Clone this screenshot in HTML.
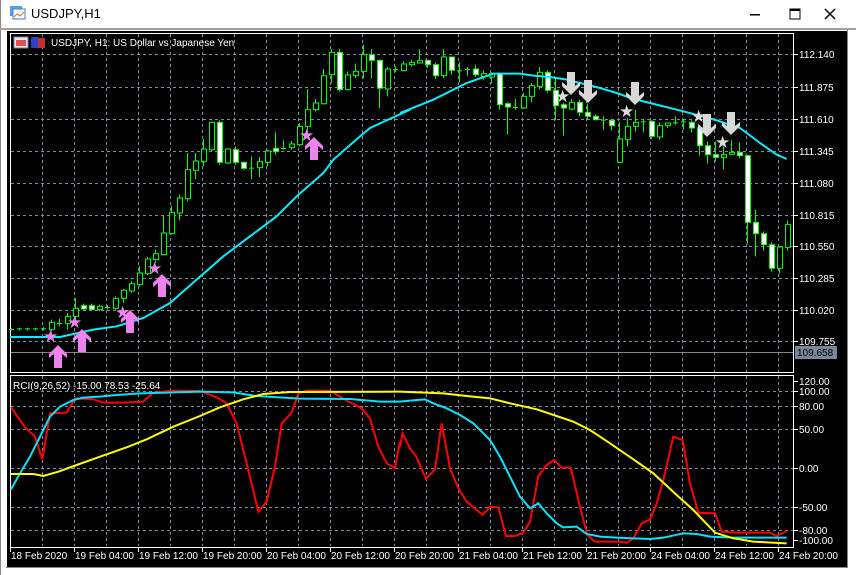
<!DOCTYPE html>
<html><head><meta charset="utf-8"><style>
body{margin:0;width:856px;height:575px;overflow:hidden;background:#fff;font-family:"Liberation Sans",sans-serif}
</style></head><body>
<svg width="856" height="575" style="position:absolute;left:0;top:0" id="s" font-family="Liberation Sans, sans-serif">
<rect x="0" y="0" width="856" height="575" fill="#fff"/>
<rect x="0" y="0" width="1" height="575" fill="#888"/>
<rect x="0" y="28" width="856" height="2" fill="#a0a0a0"/>
<rect x="7" y="31" width="840" height="536" fill="#000"/>
<rect x="847" y="30" width="1" height="538" fill="#888"/>
<rect x="6" y="567" width="842" height="1" fill="#888"/>
<rect x="10" y="6" width="12" height="10" fill="#5aa0e0"/><rect x="13" y="9" width="12" height="10" fill="#fff" stroke="#3a7fd0"/><path d="M14 17 L17 14 L20 16 L24 12" stroke="#e06020" fill="none"/>
<text x="31" y="18" font-size="13" fill="#000">USDJPY,H1</text>
<rect x="750" y="14" width="10" height="1.5" fill="#000"/>
<rect x="790" y="9" width="10" height="10" fill="none" stroke="#000"/><rect x="790" y="9" width="10" height="2" fill="#000"/>
<path d="M825 9 L835 19 M835 9 L825 19" stroke="#000" stroke-width="1.5"/>
<g id="g"></g>
</svg>
<script>
var g=document.getElementById('g'),h='';
function L(x1,y1,x2,y2,c,w,d){h+='<line x1="'+x1+'" y1="'+y1+'" x2="'+x2+'" y2="'+y2+'" stroke="'+c+'" stroke-width="'+(w||1)+'"'+(d?' stroke-dasharray="'+d+'"':'')+'/>';}
function T(x,y,s,c,sz){h+='<text x="'+x+'" y="'+y+'" fill="'+(c||'#fff')+'" font-size="'+(sz||10)+'">'+s+'</text>';}
var gc='#7f8da0';
for(var x=42;x<=778;x+=32){L(x+.5,34,x+.5,372,gc,1,'3,3');L(x+.5,376,x+.5,546,gc,1,'3,3');}
var py=[54,87,119,151,183,215,246,278,310,341],pl=['112.140','111.875','111.610','111.345','111.080','110.815','110.550','110.285','110.020','109.755'];
for(var i=0;i<py.length;i++){L(11,py[i]+.5,793,py[i]+.5,gc,1,'3,3');L(793,py[i]+.5,798,py[i]+.5,'#fff');T(799,py[i]+4,pl[i]);}
var iy=[381,391,406,429,468,507,530,540],il=['120.00','100.00','80.00','50.00','0.00','-50.00','-80.00','-100.00'];
for(var i=0;i<iy.length;i++){if(i>0&&i!=7)L(11,iy[i]+.5,793,iy[i]+.5,gc,1,'3,3');L(793,iy[i]+.5,798,iy[i]+.5,'#fff');T(799,iy[i]+4,il[i]);}
h+='<rect x="10.5" y="33.5" width="783" height="339" fill="none" stroke="#fff"/>';
h+='<rect x="10.5" y="375.5" width="783" height="172" fill="none" stroke="#fff"/>';
L(11,352.5,793,352.5,'#888');h+='<rect x="795" y="346" width="42" height="13" fill="#76889a"/>';T(797,356,'109.658','#000');
var tl=['18 Feb 2020','19 Feb 04:00','19 Feb 12:00','19 Feb 20:00','20 Feb 04:00','20 Feb 12:00','20 Feb 20:00','21 Feb 04:00','21 Feb 12:00','21 Feb 20:00','24 Feb 04:00','24 Feb 12:00','24 Feb 20:00'];
for(var i=0;i<tl.length;i++){var x=10+64*i;L(x+.5,547,x+.5,552,'#fff');T(x+1,559,tl[i]);}
var A=[[888,890,886,892,0],[886,890,884,893,0],[886,890,884,893,0],[886,890,884,893,0],[886,887,882,892,0],[868,890,860,895,0],[870,871,858,880,0],[850,872,840,890,0],[826,850,795,860,0],[818,828,812,832,1],[818,830,812,834,1],[820,830,815,834,0],[822,823,816,830,0],[796,826,790,830,0],[772,796,768,810,0],[752,774,745,780,0],[720,755,700,760,0],[678,722,672,726,0],[662,680,650,690,0],[600,665,548,668,0],[538,602,518,605,0],[495,540,485,562,0],[410,497,360,505,0],[384,412,360,438,0],[348,386,318,400,0],[268,350,265,355,0],[268,388,262,395,1],[348,390,345,393,0],[350,388,340,395,1],[388,406,385,410,1],[404,405,370,438,0],[386,404,372,432,0],[354,388,350,400,0],[346,356,298,365,1],[345,346,322,350,0],[333,344,324,350,0],[280,335,270,340,0],[230,280,168,298,0],[210,230,198,235,0],[128,212,108,215,0],[58,125,48,150,0],[58,170,48,175,1],[126,170,115,172,0],[115,128,92,135,0],[65,115,35,135,0],[65,82,48,135,1],[82,166,80,225,1],[108,168,102,190,0],[108,109,100,118,0],[93,113,85,115,0]];
var B=[[88,95,80,100,0],[82,90,48,92,0],[82,95,80,105,1],[95,128,90,138,1],[72,128,48,135,0],[72,112,72,125,1],[112,113,88,148,0],[108,109,102,128,0],[108,125,95,130,1],[122,130,112,140,0],[122,132,118,150,0],[122,215,118,230,1],[212,222,208,305,1],[222,223,198,230,0],[190,225,180,228,0],[158,190,150,208,0],[118,160,102,168,0],[118,172,112,178,1],[172,218,135,262,1],[215,225,210,308,1],[208,228,198,232,0],[208,238,200,250,1],[238,250,212,260,1],[250,260,245,262,1],[260,261,250,290,0],[262,278,258,292,1],[318,388,268,390,0],[280,320,255,340,0],[268,280,230,296,0],[265,266,258,298,0],[265,310,262,318,1],[278,312,268,320,0],[270,278,268,285,0],[268,269,250,275,0],[265,266,258,290,0],[268,285,262,298,1],[285,338,280,368,1],[338,365,325,392,1],[365,373,325,385,1],[365,374,340,408,0],[358,364,322,365,0],[358,368,328,375,1],[368,568,365,632,1],[568,602,530,670,1],[602,635,595,652,1],[635,706,628,716,1],[642,706,640,722,0],[575,643,562,652,0]];
var C=A.concat(B);
for(var k=0;k<C.length;k++){var c=C[k],x=11+8*k,bt=c[0]/3+33,bb=c[1]/3+33,wt=c[2]/3+33,wb=c[3]/3+33;
L(x+.5,wt,x+.5,wb,'#00ff00');
if(bb-bt<1.5){L(x-2,bt+.5,x+3,bt+.5,'#00ff00');}
else h+='<rect x="'+(x-2)+'.5" y="'+bt+'" width="5" height="'+(bb-bt)+'" fill="'+(c[4]?'#fff':'#000')+'" stroke="#00ff00"/>';}
function P(pts,ox,oy,c,w){var s='';for(var i=0;i<pts.length;i+=2)s+=(pts[i]/3+ox)+','+(pts[i+1]/3+oy)+' ';h+='<polyline points="'+s+'" fill="none" stroke="'+c+'" stroke-width="'+(w||2)+'"/>';}
P([0,912,150,912,250,890,320,880,400,855,480,810,560,740,640,670,720,610,800,550,860,490,940,420,970,380,1050,310,1080,285,1200,230],10,33,'#00f0ff',2);
P([0,240,100,200,200,150,280,122,360,122,400,128,450,132,500,140,600,165,650,180,700,198,750,210,850,235,950,262,1020,285,1080,330,1130,365,1160,378],400,33,'#00f0ff',2);
function up(x,y){h+='<path d="M'+x+' '+y+' l9 9 v4 l-5 -4 v14 h-8 v-14 l-5 4 v-4 z" fill="#ee82ee"/>';}
function dn(x,y){h+='<path d="M'+x+' '+y+' l9 -9 v-4 l-5 4 v-14 h-8 v14 l-5 -4 v4 z" fill="#d8d8d8"/>';}
function st(x,y,c){h+='<text x="'+(x-7)+'" y="'+(y+6)+'" font-size="17" fill="'+c+'" font-family="DejaVu Sans">★</text>';}
[[58,345],[82,329],[130,310],[162,274],[314,137]].forEach(function(p){up(p[0],p[1]);});
[[50,336],[74,322],[122,312],[154,268],[306,135]].forEach(function(p){st(p[0],p[1],'#ee82ee');});
[[571,95],[588,103],[635,105],[707,137],[731,135]].forEach(function(p){dn(p[0],p[1]);});
[[562,96],[626,111],[698,116],[722,142]].forEach(function(p){st(p[0],p[1],'#dcdcdc');});
P([33,112,75,172,105,200,127,268,150,130,200,128,225,85,280,88,310,98,370,98,430,95,460,68,520,62,600,63,650,82,680,100,710,160,740,280,775,425,800,395,825,290,845,160,875,128,895,70,920,62,990,62,1040,92,1085,115,1110,145,1135,230,1160,280,1185,295,1200,215],0,370,'#ff0000');
P([0,230,8,190,30,235,50,262,78,327,105,298,125,160,150,295,175,355,200,395,248,435,270,410,295,412,318,498,345,498,370,488,390,455,415,318,440,285,462,270,485,293,512,293,540,410,562,495,585,515,655,515,680,518,700,505,725,460,750,448,770,400,790,330,820,200,848,210,870,340,895,428,945,430,965,485,1010,488,1110,488,1130,498,1160,483],400,370,'#ff0000');
P([33,358,60,310,90,260,115,210,150,140,180,110,220,90,250,83,300,80,350,75,420,70,500,68,600,65,700,67,760,77,800,80,900,86,1050,87,1140,95,1200,95],0,370,'#00e5ff');
P([0,95,30,92,75,88,100,100,140,115,180,135,220,160,270,210,300,260,330,320,360,380,390,415,415,400,440,430,470,460,490,472,530,470,560,492,600,500,650,503,750,507,790,503,850,490,890,492,930,500,1000,503,1160,503],400,370,'#00e5ff');
P([33,312,100,312,130,318,175,305,230,285,300,260,380,232,440,208,520,170,600,138,660,112,730,88,790,72,870,66,1200,65],0,370,'#ffff00');
P([0,65,130,70,200,78,270,85,330,100,410,118,470,138,520,155,570,180,630,220,700,268,760,310,830,375,880,420,945,488,1000,505,1060,515,1160,520],400,370,'#ffff00');
h+='<rect x="14" y="37" width="14" height="11" fill="#e8e8f0" stroke="#8080a0"/><rect x="16" y="40" width="10" height="6" fill="#e05050"/>';
h+='<rect x="31" y="37" width="8" height="11" fill="#3040c0"/><rect x="38" y="38" width="7" height="10" fill="#c03030"/>';
T(51,46,'USDJPY, H1:  US Dollar vs Japanese Yen');
T(13,389,'RCI(9,26,52) -15.00 78.53 -25.64');
g.innerHTML=h;
</script>
</body></html>
